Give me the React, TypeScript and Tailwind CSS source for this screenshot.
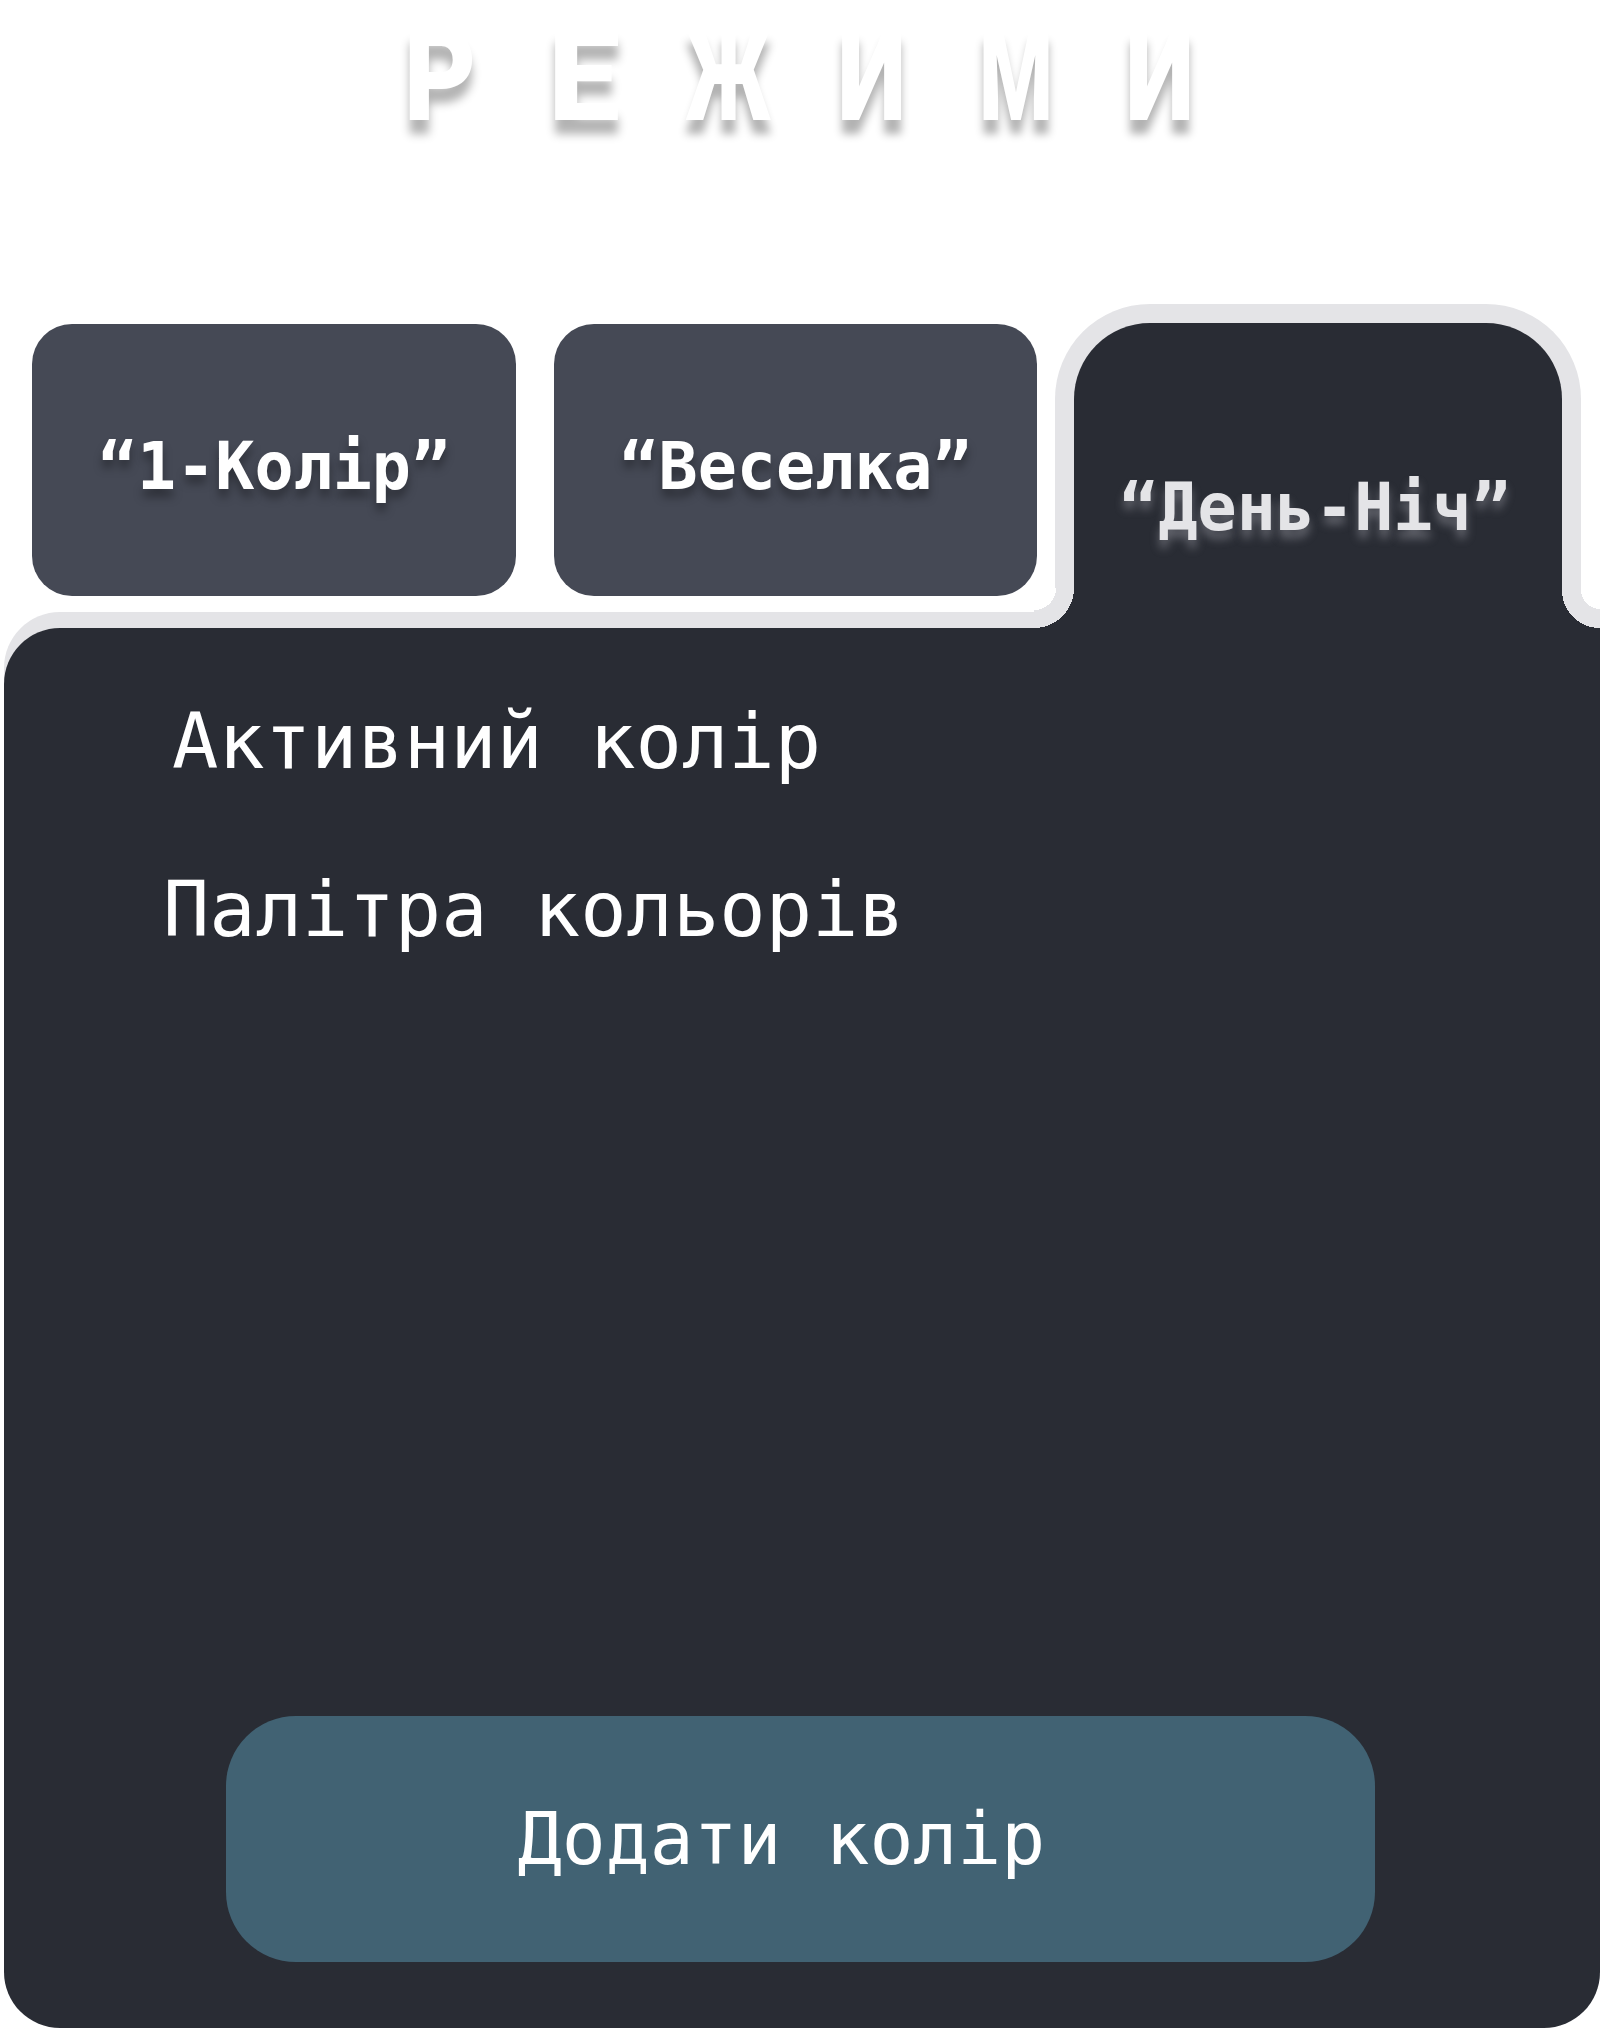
import React from "react";

const titleLetters = [
  { ch: "Р", cls: "scale-x-[0.87]" },
  { ch: "Е", cls: "scale-x-100" },
  { ch: "Ж", cls: "scale-x-[0.64]" },
  { ch: "И", cls: "scale-x-[0.77]" },
  { ch: "М", cls: "scale-x-[0.66]" },
  { ch: "И", cls: "scale-x-[0.77]" },
];

const mono = "font-['DejaVu_Sans_Mono',monospace]";

function Tab({ label, className }: { label: string; className?: string }) {
  return (
    <button
      type="button"
      className={`mt-[20px] flex h-[272px] items-center justify-center rounded-[40px] bg-[#454955] pt-[14px] ${className ?? ""}`}
    >
      <span
        className={`${mono} text-[65px] leading-[1.2] font-bold text-white [text-shadow:0_8px_10px_rgba(0,0,0,0.35)]`}
      >
        {label}
      </span>
    </button>
  );
}

export default function App() {
  return (
    <div className="h-[2028px] w-[1600px] overflow-hidden bg-white">
      <h1 className="flex justify-center font-[Roboto,sans-serif] text-[128px] leading-[1.2] font-black text-white">
        {titleLetters.map((l, i) => (
          <span
            key={i}
            className={`block w-[144px] text-center [text-shadow:0_14px_10px_rgba(0,0,0,0.3)] ${l.cls}`}
          >
            {l.ch}
          </span>
        ))}
      </h1>

      <div className="mt-[150px] flex items-start pl-[32px]">
        <Tab label="“1-Колір”" className="w-[484px]" />
        <Tab label="“Веселка”" className="ml-[38px] w-[483px]" />

        <div className="relative z-10 ml-[18px] h-[324px] w-[526px] rounded-t-[95px] border-[19px] border-b-0 border-[#e4e4e7] bg-[#292c34] pt-[146px] text-center">
          <span
            className={`${mono} ml-[-6px] text-[65px] leading-[1.2] font-bold text-[#e4e4e7] [text-shadow:0_8px_10px_rgba(170,170,180,0.45)]`}
          >
            “День-Ніч”
          </span>
          <span className="absolute bottom-0 -left-[40px] size-[40px] bg-[radial-gradient(circle_at_0_0,#ffffff_22px,#e4e4e7_22px,#e4e4e7_40px,#292c34_40px)]" />
          <span className="absolute bottom-0 -right-[38px] size-[38px] bg-[radial-gradient(circle_at_100%_0,#ffffff_19px,#e4e4e7_19px,#e4e4e7_38px,#292c34_38px)]" />
        </div>
      </div>

      <section className="ml-[4px] flex h-[1400px] w-[1596px] flex-col rounded-tl-[56px] rounded-b-[56px] bg-[#292c34] pt-[68px] pb-[66px] [box-shadow:0_-16px_0_0_#e4e4e7]">
        <p className={`${mono} ml-[168px] text-[77px] leading-[1.2] text-white`}>
          Активний колір
        </p>
        <p className={`${mono} mt-[76px] ml-[159px] text-[77px] leading-[1.2] text-white`}>
          Палітра кольорів
        </p>

        <button
          type="button"
          className="mt-auto ml-[222px] flex h-[246px] w-[1149px] items-center justify-center rounded-[70px] bg-[#416273] pr-[38px]"
        >
          <span className={`${mono} text-[73px] leading-[1.2] text-white`}>
            Додати колір
          </span>
        </button>
      </section>
    </div>
  );
}
